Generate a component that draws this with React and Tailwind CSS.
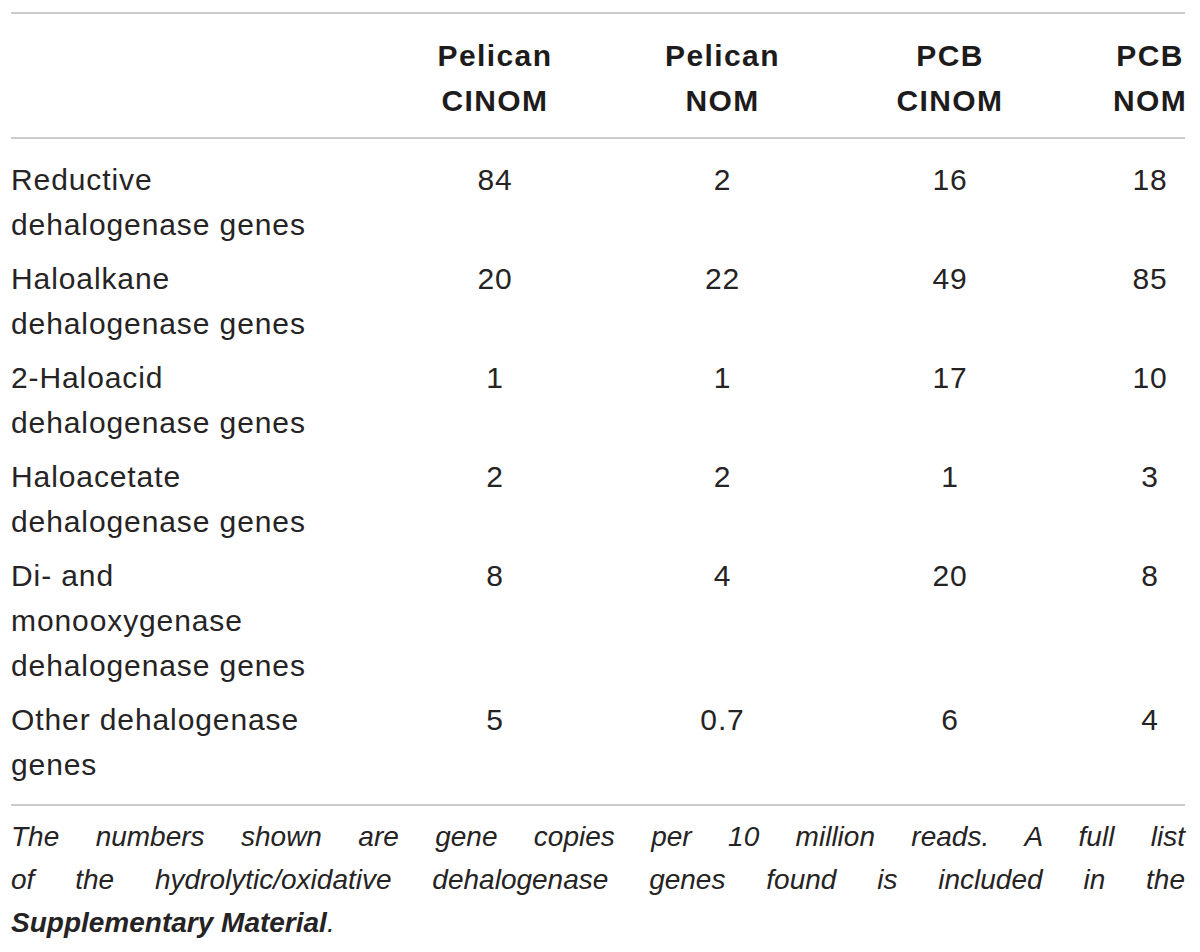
import React from 'react';

const rows = [
    { label: ['Reductive', 'dehalogenase genes'], values: ['84', '2', '16', '18'] },
    { label: ['Haloalkane', 'dehalogenase genes'], values: ['20', '22', '49', '85'] },
    { label: ['2-Haloacid', 'dehalogenase genes'], values: ['1', '1', '17', '10'] },
    { label: ['Haloacetate', 'dehalogenase genes'], values: ['2', '2', '1', '3'] },
    { label: ['Di- and', 'monooxygenase', 'dehalogenase genes'], values: ['8', '4', '20', '8'] },
    { label: ['Other dehalogenase', 'genes'], values: ['5', '0.7', '6', '4'] },
];

const headers = [
    ['Pelican', 'CINOM'],
    ['Pelican', 'NOM'],
    ['PCB', 'CINOM'],
    ['PCB', 'NOM'],
];

const cols = 'grid grid-cols-[369px_230px_225px_230px_120px]';

const Cell = ({ children, last }) => (
    <div className={`flex justify-center ${last ? 'pl-[50px]' : ''}`}>
        <div className="whitespace-nowrap text-center">{children}</div>
    </div>
);

const App = () => {
    return (
        <div
            className="min-h-[952px] bg-white px-[11px] pt-[12px] text-[#262324] text-[30px] leading-[45px] tracking-[0.9px]"
            style={{ fontFamily: '"Liberation Sans", Arial, sans-serif' }}
        >
            <div className="w-[1174px]">
                <div className="border-t-2 border-[#cbcbcb]" />

                <div className={`${cols} pt-[19px] pb-[14px] font-bold tracking-[1.4px] text-[#1e1b1c]`}>
                    <div />
                    {headers.map((h, i) => (
                        <Cell key={i} last={i === 3}>
                            {h.map((line) => (
                                <div key={line}>{line}</div>
                            ))}
                        </Cell>
                    ))}
                </div>

                <div className="border-t-2 border-[#cbcbcb]" />

                <div className="pt-[14px] pb-[12px]">
                    {rows.map((row, r) => (
                        <div key={r} className={`${cols} pt-[4px] pb-[5px]`}>
                            <div>
                                {row.label.map((line) => (
                                    <div key={line} className="whitespace-nowrap">{line}</div>
                                ))}
                            </div>
                            {row.values.map((v, i) => (
                                <Cell key={i} last={i === 3}>{v}</Cell>
                            ))}
                        </div>
                    ))}
                </div>

                <div className="border-t-2 border-[#cbcbcb]" />

                <div className="pt-[9px] italic leading-[43px] text-[28px] tracking-normal">
                    <div className="text-justify [text-align-last:justify]">
                        The numbers shown are gene copies per 10 million reads. A full list
                    </div>
                    <div className="text-justify [text-align-last:justify]">
                        of the hydrolytic/oxidative dehalogenase genes found is included in the
                    </div>
                    <div>
                        <span className="font-bold">Supplementary Material</span>.
                    </div>
                </div>
            </div>
        </div>
    );
};

export default App;
